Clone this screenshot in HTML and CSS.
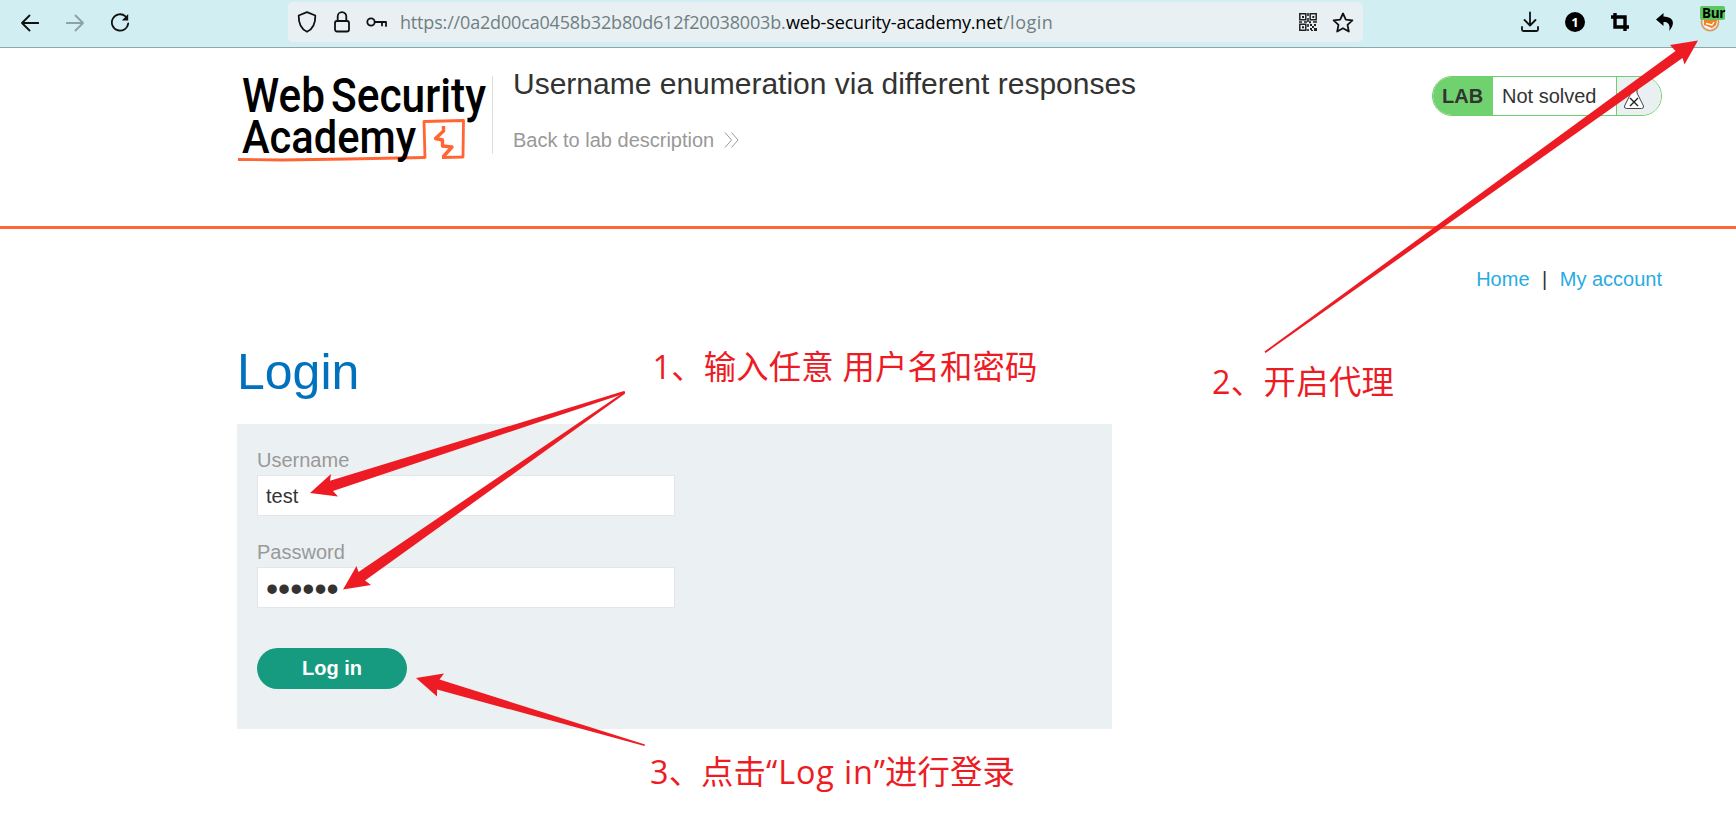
FILE: index.html
```html
<!DOCTYPE html>
<html lang="en">
<head>
<meta charset="utf-8">
<title>Username enumeration via different responses</title>
<link rel="stylesheet" href="styles.css">
</head>
<body>
<header class="toolbar">
  <div class="nav-buttons">
    <svg width="18" height="18" viewBox="0 0 18 18" class="line"><path d="M17.5 9H1M8.5 1.5 1 9l7.500 7.500"/></svg>
    <svg width="18" height="18" viewBox="0 0 18 18" class="line dim"><path d="M.5 9H17M9.500 1.500 17 9l-7.500 7.500"/></svg>
    <svg width="20" height="20" viewBox="0 0 20 20" class="line"><path d="M14.500 3.300A8.200 8.200 0 1 0 17.200 10.500"/><path d="M17.200 1v6.600h-6.400z" fill="#111" stroke="none"/></svg>
  </div>
  <div class="address">
    <svg class="line shield" width="20" height="22" viewBox="0 0 20 22"><path d="M10 1.200 18.300 4.500C18.500 12 16 18 10 20.800 4 18 1.500 12 1.700 4.500z"/></svg>
    <svg class="line lock" width="18" height="22" viewBox="0 0 18 22"><rect x="2" y="10" width="14" height="10.500" rx="2"/><path d="M4.700 10V5.500a4.300 4.300 0 0 1 8.600 0V10"/></svg>
    <svg class="line key" width="22" height="12" viewBox="0 0 22 12"><circle cx="5" cy="6" r="3.700"/><path d="M8.700 6H20v4M16 6v3.500"/></svg>
    <div class="url"><span class="host-prefix">https://0a2d00ca0458b32b80d612f20038003b.</span><span class="domain">web-security-academy.net</span><span class="path">/login</span></div>
    <svg class="qr" width="18" height="18" viewBox="0 0 18 18"><g fill="none" stroke="#222" stroke-width="1.500"><path d="M.8.8h6v6h-6zM11.200.8h6v6h-6zM.8 11.200h6v6h-6z"/></g><path fill="#222" d="M3 3h2v2H3zM13.300 3h2v2h-2zM3 13.300h2v2H3zM8.200 0h1.600v3H8.200zM8.200 5h1.600v4H8.200zM0 8.200h3v1.600H0zM5 8.200h3v1.600H5zM10 8.200h2v2h-2zM14 8.200h4v1.600h-4zM8.200 11h1.600v3H8.200zM8.200 16h1.600v2H8.200zM11 11h2v2h-2zM15 11h2v2h-2zM13 13h2v2h-2zM11 15h2v2h-2zM15 15h3v3h-3zM12 17h2v1h-2z"/></svg>
    <svg class="line star" width="22" height="21" viewBox="0 0 22 21"><path d="M11 1.500l2.800 6.100 6.600.8-4.900 4.500 1.300 6.600L11 16.200 5.200 19.500l1.300-6.600L1.600 8.400l6.600-.8z"/></svg>
  </div>
  <div class="extensions">
    <svg class="line" width="20" height="22" viewBox="0 0 20 22"><path d="M10 1.500V14M4.500 9 10 14.500 15.500 9M2 16v2.500q0 1.500 1.500 1.500h13q1.500 0 1.500-1.500V16"/></svg>
    <span class="counter">1</span>
    <svg width="20" height="20" viewBox="0 0 20 20"><path d="M5 1v14h14M1 5h14v14" fill="none" stroke="#000" stroke-width="3.400"/></svg>
    <svg width="20" height="20" viewBox="0 0 20 20"><path d="M8.500 1 1 7.500 8.500 14V10c5.500 0 7 3.500 5.500 9 5.500-5.500 6.500-14-5.500-14.500z"/></svg>
    <div class="proxy">
      <svg width="20" height="20" viewBox="0 0 20 20"><circle cx="10" cy="9" r="8.600" fill="#e4e8e8" stroke="#db9a60" stroke-width="1.600"/><path d="M4 7h13l-1 5-4 3-8-3z" fill="#f58220"/><path d="M6 10.500 12 12l2-3M5 13l6 3" fill="none" stroke="#fff" stroke-width="1.300"/></svg>
      <span class="badge">Bur</span>
    </div>
  </div>
</header>

<section class="lab-header">
  <svg class="logo" width="255" height="100" viewBox="0 0 255 100">
    <g font-family="Roboto, sans-serif" font-weight="500" font-size="47.500">
      <text x="5" y="44.300" textLength="83" lengthAdjust="spacingAndGlyphs">Web</text>
      <text x="94" y="44.300" textLength="155" lengthAdjust="spacingAndGlyphs">Security</text>
    </g>
    <g fill="none" stroke="#ff6633" stroke-width="2.800" stroke-linejoin="round">
      <path d="M188 90.500 187 53.500 226.500 52.500 226 89 205 89.500"/>
      <path d="M206.500 58v5l-8 7.500 7 1.500v6l9.500 1-9 10" stroke-width="3.400"/>
    </g>
    <path d="M1 91.500 45 92 110 91 188 89.500" fill="none" stroke="#ff6633" stroke-width="2.800"/>
    <text x="5" y="85" font-family="Roboto, sans-serif" font-weight="500" font-size="47" textLength="174" lengthAdjust="spacingAndGlyphs">Academy</text>
  </svg>
  <div class="title-block">
    <h2>Username enumeration via different responses</h2>
    <a class="back">Back to lab description
      <svg width="15" height="16" viewBox="0 0 15 16"><path d="M1 .5 7.500 8 1 15.500M7.500.5 14 8l-6.500 7.500" fill="none" stroke="#999" stroke-width="1"/></svg></a>
  </div>
  <div class="lab-status">
    <span class="lab-tag">LAB</span>
    <span class="lab-state">Not solved</span>
    <span class="lab-icon"><svg width="22" height="24" viewBox="0 0 22 24"><path d="M7 1h8M8 1v6L1.500 20q-.5 2.500 2 2.500h15q2.500 0 2-2.500L14 7V1" fill="#fff" stroke="#444" stroke-width="1"/><path d="m7 12 8 8M15 12l-8 8" stroke="#222" stroke-width="1.400"/></svg></span>
  </div>
</section>

<main class="content">
  <nav class="links"><a>Home</a><span>|</span><a>My account</a></nav>
  <h1>Login</h1>
  <form class="login-form">
    <label for="username">Username</label>
    <input id="username" type="text" value="test">
    <label for="password">Password</label>
    <input id="password" type="password" value="secret">
    <button type="button">Log in</button>
  </form>
</main>

<svg class="annotations" width="1736" height="813" viewBox="0 0 1736 813">
  <path d="M310 493 331 474 330 480.700 624 391Q626 392 624.500 393.500L333 491 338 496.500Z"/>
  <path d="M343 589.500 356.500 566 358.500 572 624 392Q626 392 624.500 394L365 580.500 371 585Z"/>
  <path d="M416 678 444 673.500 439.500 679.500 645 744.500 644.500 746 437 689.500 437 696.500Z"/>
  <path d="M1698 40.500 1670 45 1675.500 51 1264.500 351.500 1265.500 353 1682.500 58 1684.500 64.500Z"/>
  <text x="652.500" y="379" textLength="385">1、输入任意 用户名和密码</text>
  <text x="1212" y="394" textLength="182">2、开启代理</text>
  <text x="650" y="784" textLength="116">3、点击</text>
  <text x="766" y="784" textLength="119" xml:space="preserve">“Log in”</text>
  <text x="885" y="784" textLength="130">进行登录</text>
</svg>
</body>
</html>
```
FILE: styles.css
```css
* { box-sizing: border-box; }
body {
  margin: 0;
  width: 1736px;
  height: 813px;
  overflow: hidden;
  position: relative;
  background: #fff;
  color: #333332;
  font: 20px/24px "Liberation Sans", Arial, sans-serif;
}
svg { display: block; flex: none; }
.line { fill: none; stroke: #111; stroke-width: 1.8; stroke-linecap: round; stroke-linejoin: round; }
.dim { stroke: #8ba2a7; }

.toolbar {
  height: 48px;
  display: flex;
  align-items: flex-start;
  background: #d1eef2;
  border-bottom: 1px solid #8fa6ac;
}
.nav-buttons { width: 288px; height: 45px; padding-left: 21px; display: flex; align-items: center; gap: 27px; }
.address {
  width: 1075px;
  height: 40px;
  margin-top: 2px;
  padding: 0 9px;
  display: flex;
  align-items: center;
  background: #e9f0f3;
  border-radius: 5px;
}
.lock { margin-left: 16px; }
.key { margin-left: 15px; }
.url {
  margin-left: 12px;
  width: 899px;
  display: flex;
  white-space: nowrap;
  font: 18px/37px "Open Sans", sans-serif;
  color: #6f7f82;
}
.host-prefix { width: 386px; letter-spacing: -0.17px; }
.domain { width: 217px; color: #000; letter-spacing: -0.15px; }
.path { letter-spacing: .5px; }
.star { margin-left: 15px; }
.extensions { height: 44px; margin-left: 157px; display: flex; align-items: center; gap: 25px; }
.counter {
  width: 20px;
  height: 20px;
  border-radius: 50%;
  background: #000;
  color: #fff;
  text-align: center;
  font: bold 13px/20px "Open Sans", sans-serif;
}
.proxy { position: relative; width: 26px; height: 20px; padding-top: 1px; }
.badge {
  position: absolute;
  left: 0;
  top: -6px;
  width: 25px;
  height: 14px;
  padding-left: 2px;
  border-radius: 2px;
  background: #5cc65f;
  color: #000;
  font: bold 13.500px/14px "Open Sans", sans-serif;
  letter-spacing: -0.4px;
}

.lab-header {
  height: 181px;
  display: flex;
  align-items: flex-start;
  padding: 20px 74px 0 237px;
  border-bottom: 3px solid #ff6633;
}
.logo { overflow: visible; }
.title-block { margin: 8px 0 0; padding-left: 20px; height: 78px; border-left: 1px solid #ddd; flex: 1; }
h2 { margin: -9px 0 0; font-size: 30px; line-height: 34px; font-weight: 400; }
.back { display: flex; gap: 10px; align-items: center; margin-top: 27px; color: #999; }
.lab-status {
  display: flex;
  width: 230px;
  height: 40px;
  margin-top: 8px;
  border: 1px solid #70cf6c;
  border-radius: 20px;
  overflow: hidden;
  line-height: 39px;
}
.lab-tag { width: 60px; padding-left: 9px; background: #70d26f; font-weight: 700; }
.lab-state { width: 123px; padding-left: 9px; }
.lab-icon { flex: 1; padding: 9px 0 0 6px; background: #eaeff2; border-left: 1px solid #70cf6c; }

.content { padding: 38px 74px 0 237px; }
.links { display: flex; justify-content: flex-end; gap: 12.5px; color: #29abe2; }
.links span { color: #333; }
h1 { margin: 51px 0 0; font-size: 50px; line-height: 60px; font-weight: 400; color: #0071bd; }
.login-form {
  width: 875px;
  height: 305px;
  margin-top: 22px;
  padding: 24px 20px;
  display: flex;
  flex-direction: column;
  align-items: flex-start;
  background: #ebf0f2;
}
label { color: #999; height: 27px; line-height: 24px; }
input {
  width: 418px;
  height: 41px;
  margin-bottom: 24px;
  padding: 1px 8px 0;
  border: 1px solid #e3e6e8;
  background: #fff;
  color: #333332;
  font: 20px/38px "Liberation Sans", Arial, sans-serif;
}
#password { font-size: 34.6px; padding-left: 8px; padding-top: 3px; }
button {
  width: 150px;
  height: 41px;
  margin-top: 16px;
  padding: 0 0 1px;
  border: 0;
  border-radius: 21px;
  background: #169b80;
  color: #fff;
  font: bold 20px/40px "Liberation Sans", Arial, sans-serif;
}

.annotations {
  position: absolute;
  inset: 0;
  pointer-events: none;
  fill: #ed1c24;
  font: 32.400px "Open Sans", "Noto Sans CJK SC", sans-serif;
}
```
